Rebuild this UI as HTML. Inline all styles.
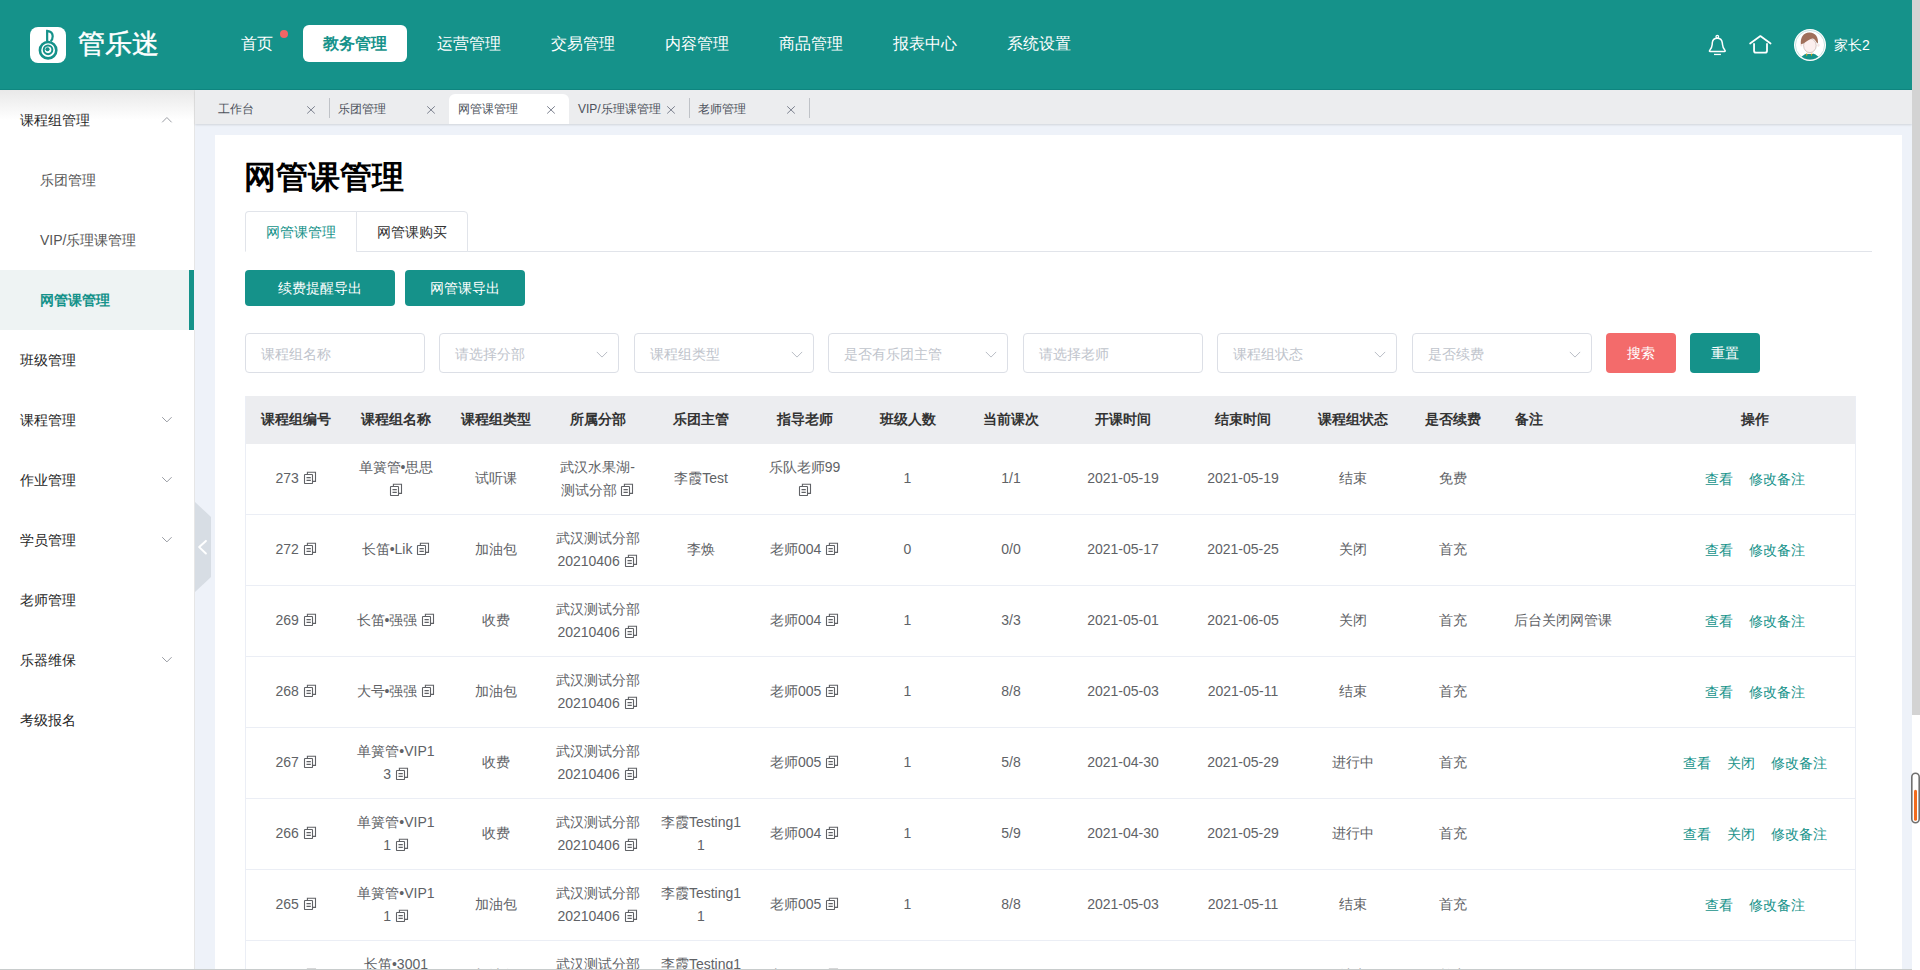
<!DOCTYPE html>
<html><head><meta charset="utf-8">
<style>
*{box-sizing:border-box;margin:0;padding:0}
html,body{width:1920px;height:970px;overflow:hidden;background:#eef2f9;font-family:"Liberation Sans",sans-serif;font-size:14px;color:#333}
.abs{position:absolute}
#hdr{position:absolute;left:0;top:0;width:1912px;height:90px;background:#15928a;border-bottom:1px solid #0f8780}
#logo{position:absolute;left:30px;top:27px;width:36px;height:36px;background:#fff;border-radius:8px}
#logotxt{position:absolute;left:78px;top:26px;color:#fff;font-size:27px;line-height:36px;letter-spacing:0;-webkit-text-stroke:.45px #fff}
.nav{position:absolute;top:25px;height:37px;line-height:37px;font-size:16px;color:#fff;text-align:center}
.nav.on{background:#fff;color:#15928a;border-radius:6px;font-weight:bold}
#dot{position:absolute;left:280px;top:30px;width:8px;height:8px;border-radius:50%;background:#f26565}
#side{position:absolute;left:0;top:90px;width:194px;height:880px;background:#fff}
.sline{position:absolute;left:194px;width:1px;background:#e6e6e6}
#sideshadow{position:absolute;left:0;top:90px;width:195px;height:30px;background:linear-gradient(rgba(225,225,225,.75),rgba(255,255,255,0))}
.mi{position:absolute;left:0;width:194px;height:60px;line-height:60px;font-size:14px;color:#262626;padding-left:20px}
.mi.sub{padding-left:40px;color:#555}
.mi.on{background:#eef3f3;color:#15928a;font-weight:bold;border-right:5px solid #15928a}
.chev{position:absolute;left:161px}
#tabs{position:absolute;left:195px;top:90px;width:1717px;height:34px;background:#ecedef;box-shadow:0 1px 2px rgba(0,0,0,.12)}
.tab{position:absolute;top:4px;height:30px;width:120px;font-size:12px;color:#4d525c;line-height:30px}
.tab.on{background:#fff;border-radius:6px 6px 0 0}
.tab .t{position:absolute;left:9px;top:0}
.tab .x{position:absolute;left:97px;top:11px}
.tdiv{position:absolute;top:98px;width:1px;height:20px;background:#bfc2c7}
#card{position:absolute;left:215px;top:135px;width:1687px;height:835px;background:#fff}
#sb{position:absolute;left:1912px;top:0;width:8px;height:715px;background:#d3d3d3}
#sbw{position:absolute;left:1912px;top:715px;width:8px;height:255px;background:#fff}

#title{position:absolute;left:244px;top:156px;font-size:32px;line-height:42px;font-weight:bold;color:#000}
.ptab{position:absolute;top:211px;height:41px;line-height:40px;font-size:14px;text-align:center;border:1px solid #e1e4ea;background:#fff}
#ptline{position:absolute;left:245px;top:251px;width:1627px;height:1px;background:#e1e4ea}
.btn{position:absolute;top:270px;height:36px;line-height:36px;border-radius:4px;background:#15928a;color:#fff;text-align:center;font-size:14px;font-weight:500}
.inp{position:absolute;top:333px;width:180px;height:40px;border:1px solid #dcdfe6;border-radius:4px;background:#fff;color:#c0c4cc;line-height:40px;padding-left:15px;font-size:14px}
.inp .dd{position:absolute;left:156px;top:17px}

#tbl{position:absolute;left:245px;top:396px;width:1611px;border-left:1px solid #ebeef5;border-right:1px solid #ebeef5}
table{border-collapse:separate;border-spacing:0;table-layout:fixed;width:1609px}
th{height:48px;background:#ecedf0;color:#333;font-weight:bold;font-size:14px;text-align:center;padding:0}
td{height:71px;border-bottom:1px solid #ebeef5;color:#606266;font-size:14px;line-height:23px;text-align:center;padding:12px 0 12px 0;vertical-align:middle}
td .c{display:block;padding:0 10px;word-break:break-all;position:relative}
td .s{top:-1px}
td:nth-child(4) .c{padding:0 9px}
.cp{display:inline-block;width:14px;height:14px;vertical-align:-1px;margin-left:0}
a{color:#15928a;text-decoration:none;margin:0 8px}
</style></head><body>
<div id="hdr">
  <div id="logo"><svg width="36" height="36" viewBox="0 0 36 36" style="position:absolute;left:0;top:0" fill="none" stroke="#15928a">
<circle cx="18.1" cy="23.2" r="8.2" stroke-width="2.6"/>
<circle cx="18.05" cy="22.85" r="4.3" stroke-width="2"/>
<circle cx="17.5" cy="22.3" r="2.1" fill="#15928a" stroke="none"/><path d="M15.6 23.6Q16.8 25.6 19 25.1Q20.6 24.5 20.5 22.6" stroke="#fff" stroke-width=".8"/>
<path d="M17.15 14.3V3.9Q22.7 4.6 22.7 9.3Q22.7 12.6 20.6 14.2" stroke-width="2.2"/>
</svg></div>
  <div id="logotxt">管乐迷</div>
  <div class="nav" style="left:221px;width:72px">首页</div>
  <div id="dot"></div>
  <div class="nav on" style="left:303px;width:104px">教务管理</div>
  <div class="nav" style="left:417px;width:104px">运营管理</div>
  <div class="nav" style="left:531px;width:104px">交易管理</div>
  <div class="nav" style="left:645px;width:104px">内容管理</div>
  <div class="nav" style="left:759px;width:104px">商品管理</div>
  <div class="nav" style="left:873px;width:104px">报表中心</div>
  <div class="nav" style="left:987px;width:104px">系统设置</div>
<svg style="position:absolute;left:1704px;top:30px" width="30" height="30" viewBox="0 0 30 30" fill="none" stroke="#fff">
<circle cx="13.3" cy="6.75" r="1.3" stroke-width="1.3"/>
<path d="M5.7 20.4C7.3 18.4 8.1 16.8 8.2 14.5L8.3 12.8C8.5 10.2 10.5 8.3 13.3 8.3C16.1 8.3 18 10.2 18.3 12.8L18.5 14.5C18.6 16.8 19.4 18.4 21 20.4Q21.6 21.4 20.5 21.4H6.1Q5 21.4 5.7 20.4Z" stroke-width="1.5"/>
<path d="M10 24.45H16.9" stroke-width="1.3"/>
</svg>
<svg style="position:absolute;left:1704px;top:30px" width="72" height="30" viewBox="0 0 72 30" fill="none" stroke="#fff" stroke-linecap="round" stroke-linejoin="round">
<path d="M46.1 13.5L56.4 6L66.6 13.5" stroke-width="1.7"/>
<path d="M50.05 13.3V20.7Q50.05 22.7 52 22.7H61Q63 22.7 63 20.7V13.3" stroke-width="1.8" stroke-linecap="butt"/>
</svg>
<svg style="position:absolute;left:1794px;top:29px" width="32" height="32" viewBox="0 0 32 32">
<defs><clipPath id="av"><circle cx="16" cy="16" r="14.4"/></clipPath></defs>
<circle cx="16" cy="16" r="16" fill="#fff"/>
<circle cx="16" cy="16" r="14.6" fill="#fff" stroke="#9fd0cc" stroke-width=".6"/>
<g clip-path="url(#av)">
<path d="M7.8 27.6Q10.5 25 13 24.6H19Q21.5 25 24.2 27.6V33H7.8Z" fill="#15928a"/>
<rect x="12.6" y="21" width="6.6" height="4" fill="#fcefee"/>
<path d="M11.75 24.5L13.6 24.95L12.8 27.4ZM18.35 24.5L16.7 24.95L17.5 27.4Z" fill="#d9a416"/>
<ellipse cx="7.4" cy="15.9" rx="1.1" ry="1.6" fill="#f6e6e4"/><ellipse cx="24.4" cy="16.2" rx="1.1" ry="1.6" fill="#f6e6e4"/>
<ellipse cx="15.9" cy="16.6" rx="6.3" ry="7" fill="#fcefee" stroke="#8d6e66" stroke-width=".35"/>
<path d="M6.9 15.2C6.2 9 9.2 3.6 15.4 3.5C21.8 3.6 24.6 8.5 23.9 14.6L22.6 13.6C21.6 11.3 20.2 9.6 18.2 9.6C15.6 9.8 12.3 13 9.5 14.6Z" fill="#a0705a"/>
</g>
</svg>
<div style="position:absolute;left:1834px;top:36px;font-size:14px;line-height:18px;color:#fff">家长2</div>

</div>
<div id="side">
  <div class="mi" style="top:0">课程组管理</div><svg class="chev" style="top:26px" width="12" height="8" viewBox="0 0 12 8"><path d="M1.2 6.3L5.9 1.5L10.6 6.3" fill="none" stroke="#999ca3" stroke-width="1"/></svg>
  <div class="mi sub" style="top:60px">乐团管理</div>
  <div class="mi sub" style="top:120px">VIP/乐理课管理</div>
  <div class="mi on sub" style="top:180px">网管课管理</div>
  <div class="mi" style="top:240px">班级管理</div>
  <div class="mi" style="top:300px">课程管理</div><svg class="chev" style="top:326px" width="12" height="8" viewBox="0 0 12 8"><path d="M1.2 1.2L5.9 5.9L10.6 1.2" fill="none" stroke="#999ca3" stroke-width="1"/></svg>
  <div class="mi" style="top:360px">作业管理</div><svg class="chev" style="top:386px" width="12" height="8" viewBox="0 0 12 8"><path d="M1.2 1.2L5.9 5.9L10.6 1.2" fill="none" stroke="#999ca3" stroke-width="1"/></svg>
  <div class="mi" style="top:420px">学员管理</div><svg class="chev" style="top:446px" width="12" height="8" viewBox="0 0 12 8"><path d="M1.2 1.2L5.9 5.9L10.6 1.2" fill="none" stroke="#999ca3" stroke-width="1"/></svg>
  <div class="mi" style="top:480px">老师管理</div>
  <div class="mi" style="top:540px">乐器维保</div><svg class="chev" style="top:566px" width="12" height="8" viewBox="0 0 12 8"><path d="M1.2 1.2L5.9 5.9L10.6 1.2" fill="none" stroke="#999ca3" stroke-width="1"/></svg>
  <div class="mi" style="top:600px">考级报名</div>
</div>
<div class="sline" style="top:90px;height:180px"></div><div class="sline" style="top:330px;height:640px"></div><div id="sideshadow"></div>
<div id="tabs">
  <div class="tab" style="left:14px"><span class="t">工作台</span><svg class="x" width="10" height="10" viewBox="0 0 10 10"><path d="M1.2 1.3L8.8 8.5M8.8 1.3L1.2 8.5" fill="none" stroke="#7d8290" stroke-width="1"/></svg></div>
  <div class="tab" style="left:134px"><span class="t">乐团管理</span><svg class="x" width="10" height="10" viewBox="0 0 10 10"><path d="M1.2 1.3L8.8 8.5M8.8 1.3L1.2 8.5" fill="none" stroke="#7d8290" stroke-width="1"/></svg></div>
  <div class="tab on" style="left:254px"><span class="t">网管课管理</span><svg class="x" width="10" height="10" viewBox="0 0 10 10"><path d="M1.2 1.3L8.8 8.5M8.8 1.3L1.2 8.5" fill="none" stroke="#7d8290" stroke-width="1"/></svg></div>
  <div class="tab" style="left:374px"><span class="t">VIP/乐理课管理</span><svg class="x" width="10" height="10" viewBox="0 0 10 10"><path d="M1.2 1.3L8.8 8.5M8.8 1.3L1.2 8.5" fill="none" stroke="#7d8290" stroke-width="1"/></svg></div>
  <div class="tab" style="left:494px"><span class="t">老师管理</span><svg class="x" width="10" height="10" viewBox="0 0 10 10"><path d="M1.2 1.3L8.8 8.5M8.8 1.3L1.2 8.5" fill="none" stroke="#7d8290" stroke-width="1"/></svg></div>
</div>
<div class="tdiv" style="left:329px"></div><div class="tdiv" style="left:689px"></div><div class="tdiv" style="left:809px"></div>
<div id="card"></div>
<div id="title">网管课管理</div>
<div id="ptline"></div>
<div class="ptab" style="left:245px;width:112px;color:#15928a;font-weight:500;border-bottom-color:#fff;border-radius:4px 0 0 0">网管课管理</div>
<div class="ptab" style="left:356px;width:112px;color:#333;border-radius:0 4px 0 0">网管课购买</div>
<div class="btn" style="left:245px;width:150px">续费提醒导出</div>
<div class="btn" style="left:405px;width:120px">网管课导出</div>
<div class="inp" style="left:245px">课程组名称</div>
<div class="inp" style="left:439px">请选择分部<svg class="dd" width="12" height="8" viewBox="0 0 12 8"><path d="M0.8 0.9L6 6.1L11.2 0.9" fill="none" stroke="#b9bdc5" stroke-width="1"/></svg></div>
<div class="inp" style="left:634px">课程组类型<svg class="dd" width="12" height="8" viewBox="0 0 12 8"><path d="M0.8 0.9L6 6.1L11.2 0.9" fill="none" stroke="#b9bdc5" stroke-width="1"/></svg></div>
<div class="inp" style="left:828px">是否有乐团主管<svg class="dd" width="12" height="8" viewBox="0 0 12 8"><path d="M0.8 0.9L6 6.1L11.2 0.9" fill="none" stroke="#b9bdc5" stroke-width="1"/></svg></div>
<div class="inp" style="left:1023px">请选择老师</div>
<div class="inp" style="left:1217px">课程组状态<svg class="dd" width="12" height="8" viewBox="0 0 12 8"><path d="M0.8 0.9L6 6.1L11.2 0.9" fill="none" stroke="#b9bdc5" stroke-width="1"/></svg></div>
<div class="inp" style="left:1412px">是否续费<svg class="dd" width="12" height="8" viewBox="0 0 12 8"><path d="M0.8 0.9L6 6.1L11.2 0.9" fill="none" stroke="#b9bdc5" stroke-width="1"/></svg></div>
<div class="btn" style="left:1606px;top:333px;height:40px;line-height:40px;width:70px;background:#f36b6b">搜索</div>
<div class="btn" style="left:1690px;top:333px;height:40px;line-height:40px;width:70px">重置</div>

<div id="tbl"><table><colgroup><col style="width:100px"><col style="width:100px"><col style="width:100px"><col style="width:103px"><col style="width:104px"><col style="width:103px"><col style="width:103px"><col style="width:104px"><col style="width:120px"><col style="width:120px"><col style="width:100px"><col style="width:100px"><col style="width:152px"><col style="width:200px"></colgroup><tr><th>课程组编号</th><th>课程组名称</th><th>课程组类型</th><th>所属分部</th><th>乐团主管</th><th>指导老师</th><th>班级人数</th><th>当前课次</th><th>开课时间</th><th>结束时间</th><th>课程组状态</th><th>是否续费</th><th style="text-align:left;padding-left:12px">备注</th><th>操作</th></tr><tr><td><span class="c s">273 <svg class="cp" viewBox="0 0 14 14" fill="none" stroke="#606266" stroke-width="1.1"><rect x="1.5" y="4.5" width="8" height="9" rx=".6"/><path d="M4.4 4.5V2.2H12.5V11.4H9.5M3.5 7.6H7.8M3.5 10.4H7.8"/></svg></span></td><td><span class="c">单簧管•思思 <svg class="cp" viewBox="0 0 14 14" fill="none" stroke="#606266" stroke-width="1.1"><rect x="1.5" y="4.5" width="8" height="9" rx=".6"/><path d="M4.4 4.5V2.2H12.5V11.4H9.5M3.5 7.6H7.8M3.5 10.4H7.8"/></svg></span></td><td><span class="c s">试听课</span></td><td><span class="c">武汉水果湖-测试分部 <svg class="cp" viewBox="0 0 14 14" fill="none" stroke="#606266" stroke-width="1.1"><rect x="1.5" y="4.5" width="8" height="9" rx=".6"/><path d="M4.4 4.5V2.2H12.5V11.4H9.5M3.5 7.6H7.8M3.5 10.4H7.8"/></svg></span></td><td><span class="c s">李霞Test</span></td><td><span class="c">乐队老师99 <svg class="cp" viewBox="0 0 14 14" fill="none" stroke="#606266" stroke-width="1.1"><rect x="1.5" y="4.5" width="8" height="9" rx=".6"/><path d="M4.4 4.5V2.2H12.5V11.4H9.5M3.5 7.6H7.8M3.5 10.4H7.8"/></svg></span></td><td><span class="c s">1</span></td><td><span class="c s">1/1</span></td><td><span class="c s">2021-05-19</span></td><td><span class="c s">2021-05-19</span></td><td><span class="c s">结束</span></td><td><span class="c s">免费</span></td><td style="text-align:left"><span class="c" style="padding-left:11px"></span></td><td><a>查看</a><a>修改备注</a></td></tr><tr><td><span class="c s">272 <svg class="cp" viewBox="0 0 14 14" fill="none" stroke="#606266" stroke-width="1.1"><rect x="1.5" y="4.5" width="8" height="9" rx=".6"/><path d="M4.4 4.5V2.2H12.5V11.4H9.5M3.5 7.6H7.8M3.5 10.4H7.8"/></svg></span></td><td><span class="c s">长笛•Lik <svg class="cp" viewBox="0 0 14 14" fill="none" stroke="#606266" stroke-width="1.1"><rect x="1.5" y="4.5" width="8" height="9" rx=".6"/><path d="M4.4 4.5V2.2H12.5V11.4H9.5M3.5 7.6H7.8M3.5 10.4H7.8"/></svg></span></td><td><span class="c s">加油包</span></td><td><span class="c">武汉测试分部20210406 <svg class="cp" viewBox="0 0 14 14" fill="none" stroke="#606266" stroke-width="1.1"><rect x="1.5" y="4.5" width="8" height="9" rx=".6"/><path d="M4.4 4.5V2.2H12.5V11.4H9.5M3.5 7.6H7.8M3.5 10.4H7.8"/></svg></span></td><td><span class="c s">李焕</span></td><td><span class="c s">老师004 <svg class="cp" viewBox="0 0 14 14" fill="none" stroke="#606266" stroke-width="1.1"><rect x="1.5" y="4.5" width="8" height="9" rx=".6"/><path d="M4.4 4.5V2.2H12.5V11.4H9.5M3.5 7.6H7.8M3.5 10.4H7.8"/></svg></span></td><td><span class="c s">0</span></td><td><span class="c s">0/0</span></td><td><span class="c s">2021-05-17</span></td><td><span class="c s">2021-05-25</span></td><td><span class="c s">关闭</span></td><td><span class="c s">首充</span></td><td style="text-align:left"><span class="c" style="padding-left:11px"></span></td><td><a>查看</a><a>修改备注</a></td></tr><tr><td><span class="c s">269 <svg class="cp" viewBox="0 0 14 14" fill="none" stroke="#606266" stroke-width="1.1"><rect x="1.5" y="4.5" width="8" height="9" rx=".6"/><path d="M4.4 4.5V2.2H12.5V11.4H9.5M3.5 7.6H7.8M3.5 10.4H7.8"/></svg></span></td><td><span class="c s">长笛•强强 <svg class="cp" viewBox="0 0 14 14" fill="none" stroke="#606266" stroke-width="1.1"><rect x="1.5" y="4.5" width="8" height="9" rx=".6"/><path d="M4.4 4.5V2.2H12.5V11.4H9.5M3.5 7.6H7.8M3.5 10.4H7.8"/></svg></span></td><td><span class="c s">收费</span></td><td><span class="c">武汉测试分部20210406 <svg class="cp" viewBox="0 0 14 14" fill="none" stroke="#606266" stroke-width="1.1"><rect x="1.5" y="4.5" width="8" height="9" rx=".6"/><path d="M4.4 4.5V2.2H12.5V11.4H9.5M3.5 7.6H7.8M3.5 10.4H7.8"/></svg></span></td><td><span class="c"></span></td><td><span class="c s">老师004 <svg class="cp" viewBox="0 0 14 14" fill="none" stroke="#606266" stroke-width="1.1"><rect x="1.5" y="4.5" width="8" height="9" rx=".6"/><path d="M4.4 4.5V2.2H12.5V11.4H9.5M3.5 7.6H7.8M3.5 10.4H7.8"/></svg></span></td><td><span class="c s">1</span></td><td><span class="c s">3/3</span></td><td><span class="c s">2021-05-01</span></td><td><span class="c s">2021-06-05</span></td><td><span class="c s">关闭</span></td><td><span class="c s">首充</span></td><td style="text-align:left"><span class="c s" style="padding-left:11px">后台关闭网管课</span></td><td><a>查看</a><a>修改备注</a></td></tr><tr><td><span class="c s">268 <svg class="cp" viewBox="0 0 14 14" fill="none" stroke="#606266" stroke-width="1.1"><rect x="1.5" y="4.5" width="8" height="9" rx=".6"/><path d="M4.4 4.5V2.2H12.5V11.4H9.5M3.5 7.6H7.8M3.5 10.4H7.8"/></svg></span></td><td><span class="c s">大号•强强 <svg class="cp" viewBox="0 0 14 14" fill="none" stroke="#606266" stroke-width="1.1"><rect x="1.5" y="4.5" width="8" height="9" rx=".6"/><path d="M4.4 4.5V2.2H12.5V11.4H9.5M3.5 7.6H7.8M3.5 10.4H7.8"/></svg></span></td><td><span class="c s">加油包</span></td><td><span class="c">武汉测试分部20210406 <svg class="cp" viewBox="0 0 14 14" fill="none" stroke="#606266" stroke-width="1.1"><rect x="1.5" y="4.5" width="8" height="9" rx=".6"/><path d="M4.4 4.5V2.2H12.5V11.4H9.5M3.5 7.6H7.8M3.5 10.4H7.8"/></svg></span></td><td><span class="c"></span></td><td><span class="c s">老师005 <svg class="cp" viewBox="0 0 14 14" fill="none" stroke="#606266" stroke-width="1.1"><rect x="1.5" y="4.5" width="8" height="9" rx=".6"/><path d="M4.4 4.5V2.2H12.5V11.4H9.5M3.5 7.6H7.8M3.5 10.4H7.8"/></svg></span></td><td><span class="c s">1</span></td><td><span class="c s">8/8</span></td><td><span class="c s">2021-05-03</span></td><td><span class="c s">2021-05-11</span></td><td><span class="c s">结束</span></td><td><span class="c s">首充</span></td><td style="text-align:left"><span class="c" style="padding-left:11px"></span></td><td><a>查看</a><a>修改备注</a></td></tr><tr><td><span class="c s">267 <svg class="cp" viewBox="0 0 14 14" fill="none" stroke="#606266" stroke-width="1.1"><rect x="1.5" y="4.5" width="8" height="9" rx=".6"/><path d="M4.4 4.5V2.2H12.5V11.4H9.5M3.5 7.6H7.8M3.5 10.4H7.8"/></svg></span></td><td><span class="c">单簧管•VIP13 <svg class="cp" viewBox="0 0 14 14" fill="none" stroke="#606266" stroke-width="1.1"><rect x="1.5" y="4.5" width="8" height="9" rx=".6"/><path d="M4.4 4.5V2.2H12.5V11.4H9.5M3.5 7.6H7.8M3.5 10.4H7.8"/></svg></span></td><td><span class="c s">收费</span></td><td><span class="c">武汉测试分部20210406 <svg class="cp" viewBox="0 0 14 14" fill="none" stroke="#606266" stroke-width="1.1"><rect x="1.5" y="4.5" width="8" height="9" rx=".6"/><path d="M4.4 4.5V2.2H12.5V11.4H9.5M3.5 7.6H7.8M3.5 10.4H7.8"/></svg></span></td><td><span class="c"></span></td><td><span class="c s">老师005 <svg class="cp" viewBox="0 0 14 14" fill="none" stroke="#606266" stroke-width="1.1"><rect x="1.5" y="4.5" width="8" height="9" rx=".6"/><path d="M4.4 4.5V2.2H12.5V11.4H9.5M3.5 7.6H7.8M3.5 10.4H7.8"/></svg></span></td><td><span class="c s">1</span></td><td><span class="c s">5/8</span></td><td><span class="c s">2021-04-30</span></td><td><span class="c s">2021-05-29</span></td><td><span class="c s">进行中</span></td><td><span class="c s">首充</span></td><td style="text-align:left"><span class="c" style="padding-left:11px"></span></td><td><a>查看</a><a>关闭</a><a>修改备注</a></td></tr><tr><td><span class="c s">266 <svg class="cp" viewBox="0 0 14 14" fill="none" stroke="#606266" stroke-width="1.1"><rect x="1.5" y="4.5" width="8" height="9" rx=".6"/><path d="M4.4 4.5V2.2H12.5V11.4H9.5M3.5 7.6H7.8M3.5 10.4H7.8"/></svg></span></td><td><span class="c">单簧管•VIP11 <svg class="cp" viewBox="0 0 14 14" fill="none" stroke="#606266" stroke-width="1.1"><rect x="1.5" y="4.5" width="8" height="9" rx=".6"/><path d="M4.4 4.5V2.2H12.5V11.4H9.5M3.5 7.6H7.8M3.5 10.4H7.8"/></svg></span></td><td><span class="c s">收费</span></td><td><span class="c">武汉测试分部20210406 <svg class="cp" viewBox="0 0 14 14" fill="none" stroke="#606266" stroke-width="1.1"><rect x="1.5" y="4.5" width="8" height="9" rx=".6"/><path d="M4.4 4.5V2.2H12.5V11.4H9.5M3.5 7.6H7.8M3.5 10.4H7.8"/></svg></span></td><td><span class="c">李霞Testing11</span></td><td><span class="c s">老师004 <svg class="cp" viewBox="0 0 14 14" fill="none" stroke="#606266" stroke-width="1.1"><rect x="1.5" y="4.5" width="8" height="9" rx=".6"/><path d="M4.4 4.5V2.2H12.5V11.4H9.5M3.5 7.6H7.8M3.5 10.4H7.8"/></svg></span></td><td><span class="c s">1</span></td><td><span class="c s">5/9</span></td><td><span class="c s">2021-04-30</span></td><td><span class="c s">2021-05-29</span></td><td><span class="c s">进行中</span></td><td><span class="c s">首充</span></td><td style="text-align:left"><span class="c" style="padding-left:11px"></span></td><td><a>查看</a><a>关闭</a><a>修改备注</a></td></tr><tr><td><span class="c s">265 <svg class="cp" viewBox="0 0 14 14" fill="none" stroke="#606266" stroke-width="1.1"><rect x="1.5" y="4.5" width="8" height="9" rx=".6"/><path d="M4.4 4.5V2.2H12.5V11.4H9.5M3.5 7.6H7.8M3.5 10.4H7.8"/></svg></span></td><td><span class="c">单簧管•VIP11 <svg class="cp" viewBox="0 0 14 14" fill="none" stroke="#606266" stroke-width="1.1"><rect x="1.5" y="4.5" width="8" height="9" rx=".6"/><path d="M4.4 4.5V2.2H12.5V11.4H9.5M3.5 7.6H7.8M3.5 10.4H7.8"/></svg></span></td><td><span class="c s">加油包</span></td><td><span class="c">武汉测试分部20210406 <svg class="cp" viewBox="0 0 14 14" fill="none" stroke="#606266" stroke-width="1.1"><rect x="1.5" y="4.5" width="8" height="9" rx=".6"/><path d="M4.4 4.5V2.2H12.5V11.4H9.5M3.5 7.6H7.8M3.5 10.4H7.8"/></svg></span></td><td><span class="c">李霞Testing11</span></td><td><span class="c s">老师005 <svg class="cp" viewBox="0 0 14 14" fill="none" stroke="#606266" stroke-width="1.1"><rect x="1.5" y="4.5" width="8" height="9" rx=".6"/><path d="M4.4 4.5V2.2H12.5V11.4H9.5M3.5 7.6H7.8M3.5 10.4H7.8"/></svg></span></td><td><span class="c s">1</span></td><td><span class="c s">8/8</span></td><td><span class="c s">2021-05-03</span></td><td><span class="c s">2021-05-11</span></td><td><span class="c s">结束</span></td><td><span class="c s">首充</span></td><td style="text-align:left"><span class="c" style="padding-left:11px"></span></td><td><a>查看</a><a>修改备注</a></td></tr><tr><td><span class="c s">264 <svg class="cp" viewBox="0 0 14 14" fill="none" stroke="#606266" stroke-width="1.1"><rect x="1.5" y="4.5" width="8" height="9" rx=".6"/><path d="M4.4 4.5V2.2H12.5V11.4H9.5M3.5 7.6H7.8M3.5 10.4H7.8"/></svg></span></td><td><span class="c">长笛•3001 <svg class="cp" viewBox="0 0 14 14" fill="none" stroke="#606266" stroke-width="1.1"><rect x="1.5" y="4.5" width="8" height="9" rx=".6"/><path d="M4.4 4.5V2.2H12.5V11.4H9.5M3.5 7.6H7.8M3.5 10.4H7.8"/></svg></span></td><td><span class="c s">加油包</span></td><td><span class="c">武汉测试分部20210406 <svg class="cp" viewBox="0 0 14 14" fill="none" stroke="#606266" stroke-width="1.1"><rect x="1.5" y="4.5" width="8" height="9" rx=".6"/><path d="M4.4 4.5V2.2H12.5V11.4H9.5M3.5 7.6H7.8M3.5 10.4H7.8"/></svg></span></td><td><span class="c">李霞Testing11</span></td><td><span class="c s">老师005 <svg class="cp" viewBox="0 0 14 14" fill="none" stroke="#606266" stroke-width="1.1"><rect x="1.5" y="4.5" width="8" height="9" rx=".6"/><path d="M4.4 4.5V2.2H12.5V11.4H9.5M3.5 7.6H7.8M3.5 10.4H7.8"/></svg></span></td><td><span class="c s">1</span></td><td><span class="c s">8/8</span></td><td><span class="c s">2021-05-03</span></td><td><span class="c s">2021-05-11</span></td><td><span class="c s">结束</span></td><td><span class="c s">首充</span></td><td style="text-align:left"><span class="c"></span></td><td><a>查看</a><a>修改备注</a></td></tr></table></div>
<svg style="position:absolute;left:195px;top:502px" width="17" height="91" viewBox="0 0 17 91">
<path d="M0 0L16 15V75L0 90Z" fill="#d7dde4"/>
<path d="M10.9 38.9L4.2 45.1L10.9 51.5" fill="none" stroke="#fff" stroke-width="2" stroke-linecap="round" stroke-linejoin="round"/>
</svg>

<div style="position:absolute;left:0;top:969px;width:1920px;height:1px;background:#c8cccc"></div>
<div id="sb"></div><div id="sbw"></div><svg style="position:absolute;left:1910px;top:772px" width="10" height="52" viewBox="0 0 10 52">
<rect x="1.8" y="1.2" width="7.4" height="49.6" rx="3.7" fill="#fff" stroke="#707070" stroke-width="1.6"/>
<rect x="4" y="17.7" width="3" height="31" rx="1.5" fill="#f26b1d"/>
</svg>
</body></html>
